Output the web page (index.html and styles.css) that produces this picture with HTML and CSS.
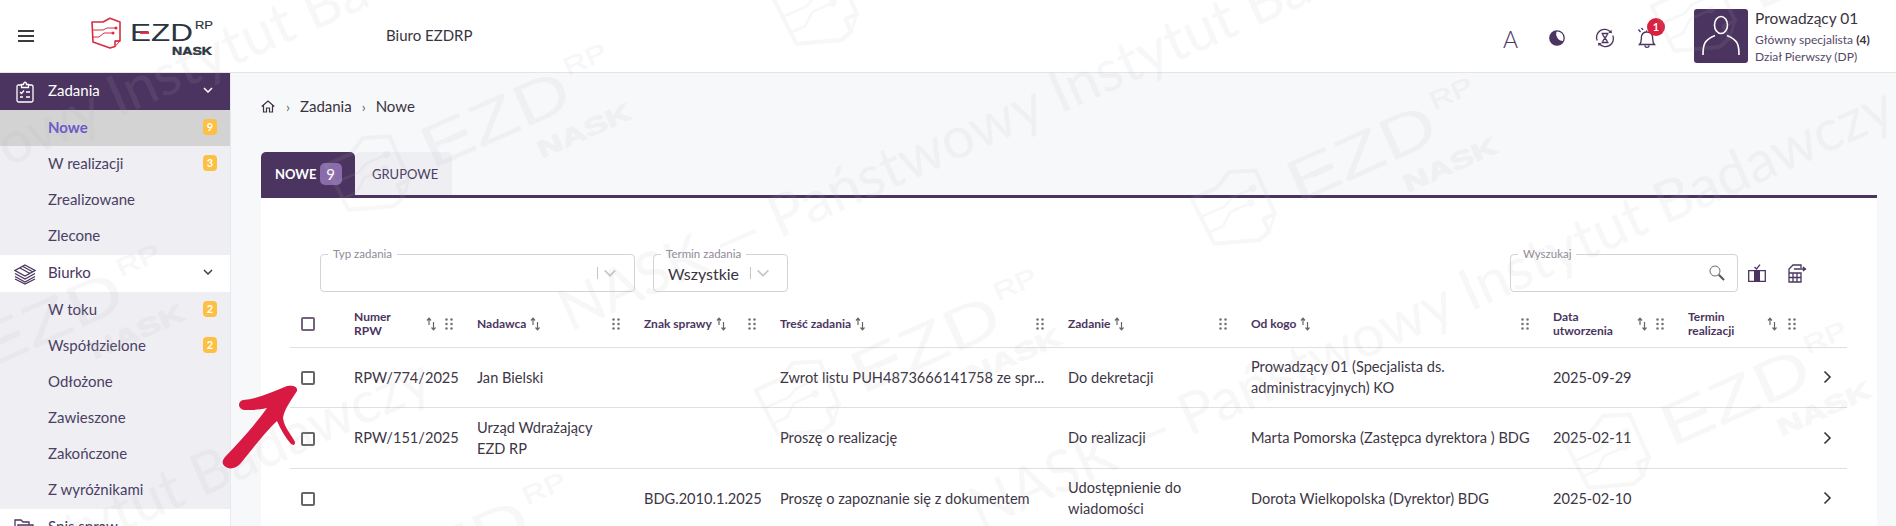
FILE: index.html
```html
<!DOCTYPE html>
<html lang="pl">
<head>
<meta charset="utf-8">
<title>EZD RP</title>
<link rel="stylesheet" href="styles.css">
</head>
<body>
<svg class="defs" width="0" height="0" aria-hidden="true">
  <defs>
    <symbol id="logo" viewBox="0 0 122 38">
      <path class="logo-line" d="M1 5H12L19 1.2 29 5V24H24V29.5L19 31 2 25Z"/>
      <path class="logo-thin" d="M24 24 29 24 24 29.5"/>
      <path class="logo-thin" d="M1 13H12L16 11H25M1.5 20H8L13 16H22"/>
      <circle class="logo-dot" cx="25" cy="11" r="1.5"/>
      <circle class="logo-dot" cx="22" cy="16" r="1.5"/>
      <text class="logo-ezd" x="39" y="24" textLength="63" lengthAdjust="spacingAndGlyphs">EZD</text>
      <rect class="logo-dash" x="49" y="14.5" width="9" height="2.4"/>
      <text class="logo-rp" x="104" y="12" textLength="18" lengthAdjust="spacingAndGlyphs">RP</text>
      <text class="logo-nask" x="81" y="38" textLength="40" lengthAdjust="spacingAndGlyphs">NASK</text>
    </symbol>
    <symbol id="sort" viewBox="0 0 10 14">
      <path d="M3 8V1.5M1 3.5 3 1.2 5 3.5M7.5 5V12.5M5.5 10.5 7.5 12.8 9.5 10.5"/>
    </symbol>
    <symbol id="grip" viewBox="0 0 8 12">
      <circle cx="1.5" cy="1.5" r="1.3"/><circle cx="6.5" cy="1.5" r="1.3"/>
      <circle cx="1.5" cy="6" r="1.3"/><circle cx="6.5" cy="6" r="1.3"/>
      <circle cx="1.5" cy="10.5" r="1.3"/><circle cx="6.5" cy="10.5" r="1.3"/>
    </symbol>
    <symbol id="chev" viewBox="0 0 10 6">
      <path d="M1 1 5 5 9 1"/>
    </symbol>
  </defs>
</svg>

<div class="app">
  <header class="topbar">
    <button class="burger" aria-label="Menu"><span></span><span></span><span></span></button>
    <svg class="logo" width="122" height="38"><use href="#logo"/></svg>
    <div class="office">Biuro EZDRP</div>
    <div class="tools">
      <span class="tool tool-a">A</span>
      <svg class="tool" width="18" height="18" viewBox="0 0 18 18"><circle class="ic-stroke" cx="9" cy="9" r="7.2"/><path class="ic-fill" d="M9 1.8A7.2 7.2 0 1 0 15.6 12 7 7 0 0 1 9 1.8Z"/></svg>
      <svg class="tool" width="20" height="20" viewBox="0 0 20 20"><path class="ic-stroke" d="M2.2 12.5A8 8 0 0 1 15.5 4M17.8 7.5A8 8 0 0 1 4.5 16"/><path class="ic-fill" d="M13.5 4.8 17 5.2 16.4 1.8ZM6.5 15.2 3 14.8 3.6 18.2Z"/><path class="ic-stroke" d="M6.5 5.5H13.5M6.5 14.5H13.5M7.5 5.5C7.5 8.5 12.5 11.5 12.5 14.5M12.5 5.5C12.5 8.5 7.5 11.5 7.5 14.5"/></svg>
      <span class="bell">
        <svg width="20" height="22" viewBox="0 0 20 22"><path class="ic-stroke" d="M2.5 17.5C5 15 4 12 4.5 9.5 5 6.5 7.5 5 10 5S15 6.500 15.500 9.500C16 12 15 15 17.500 17.500ZM8 18.500C8 21 12 21 12 18.500M9.500 5V3.500M3.500 5 1.500 2.500M6 3 4.500 .8"/></svg>
        <b class="bell-badge">1</b>
      </span>
    </div>
    <div class="user">
      <div class="avatar">
        <svg width="54" height="54" viewBox="0 0 54 54"><ellipse class="av" cx="27" cy="16" rx="6.500" ry="8.500"/><path class="av" d="M9 46C9 36 10 31 21 26.500M45 46C45 36 44 31 33 26.500"/></svg>
      </div>
      <div class="user-text">
        <div class="user-name">Prowadzący 01</div>
        <div class="user-role">Główny specjalista <b>(4)</b></div>
        <div class="user-role">Dział Pierwszy (DP)</div>
      </div>
    </div>
  </header>

  <div class="layout">
    <nav class="sidebar">
      <div class="nav-head nav-active">
        <svg class="nav-ico" width="18" height="22" viewBox="0 0 18 22"><path d="M5.500 4H2.500C1.500 4 1 4.500 1 5.500V19.500C1 20.500 1.500 21 2.500 21H15.500C16.500 21 17 20.500 17 19.500V5.500C17 4.500 16.500 4 15.500 4H12.500M5.500 3.500H7.500C7.500 .5 10.500 .5 10.500 3.500H12.500V6.500H5.500ZM4 11 5.500 12.500 8 9.500M10 11H14M4 16H7M10 16H14"/></svg>
        <span>Zadania</span>
        <svg class="nav-chev" width="10" height="6"><use href="#chev"/></svg>
      </div>
      <div class="nav-group">
        <a class="nav-item nav-current">Nowe<i class="count">9</i></a>
        <a class="nav-item">W realizacji<i class="count">3</i></a>
        <a class="nav-item">Zrealizowane</a>
        <a class="nav-item">Zlecone</a>
      </div>
      <div class="nav-head">
        <svg class="nav-ico" width="22" height="22" viewBox="0 0 22 22"><path d="M11 2 21 7.500 11 13 1 7.500ZM1 10.500 11 16 21 10.500M1 13.500 11 19 21 13.500M1 16 11 21 21 16M6 5 16 10.500M9 3.500 19 9"/></svg>
        <span>Biurko</span>
        <svg class="nav-chev" width="10" height="6"><use href="#chev"/></svg>
      </div>
      <div class="nav-group">
        <a class="nav-item">W toku<i class="count">2</i></a>
        <a class="nav-item">Współdzielone<i class="count">2</i></a>
        <a class="nav-item">Odłożone</a>
        <a class="nav-item">Zawieszone</a>
        <a class="nav-item">Zakończone</a>
        <a class="nav-item">Z wyróżnikami</a>
      </div>
      <div class="nav-head">
        <svg class="nav-ico" width="20" height="20" viewBox="0 0 20 20"><path d="M1 17V2H7L9 4H15V7M4 7H19V18H4ZM8 11H15"/></svg>
        <span>Spis spraw</span>
      </div>
    </nav>

    <main class="main">
      <div class="crumbs">
        <svg class="home" width="14" height="13" viewBox="0 0 14 13"><path d="M.7 6.500 7 1 13.300 6.500M2.500 5.500V12H5.500V8H8.500V12H11.500V5.500"/></svg>
        <span class="sep">›</span><span>Zadania</span><span class="sep">›</span><span>Nowe</span>
      </div>

      <div class="tabs">
        <div class="tab tab-on">NOWE <b class="tab-count">9</b></div>
        <div class="tab tab-off">GRUPOWE</div>
      </div>

      <section class="card">
        <div class="filters">
          <div class="field field-type">
            <label class="field-label">Typ zadania</label>
            <span class="bar"></span><svg class="sel-chev" width="14" height="8"><use href="#chev"/></svg>
          </div>
          <div class="field field-term">
            <label class="field-label">Termin zadania</label>
            <span class="field-value">Wszystkie</span>
            <span class="bar"></span><svg class="sel-chev" width="14" height="8"><use href="#chev"/></svg>
          </div>
          <div class="field field-search">
            <label class="field-label">Wyszukaj</label>
            <svg class="loupe" width="16" height="16" viewBox="0 0 16 16"><circle cx="6" cy="6" r="5"/><path class="loupe-h" d="M9.800 9.800 15 15"/></svg>
          </div>
          <svg class="act act-cols" width="18" height="18" viewBox="0 0 18 18"><path class="act-l" d="M.7 6.700H17.300V17.300H.7Z"/><path class="act-f" d="M6 6.700H12V17.300H6Z"/><path class="act-l" d="M6.500 3 8.500 5 12 .7"/></svg>
          <svg class="act act-exp" width="20" height="19" viewBox="0 0 20 19"><path class="act-l" d="M2 18V5L6 1H14V4M2 9H14V18H2ZM2 13.500H14M6 9V18M10 9V18M7 5H18M16 3 18.500 5 16 7"/></svg>
        </div>

        <table class="grid">
          <colgroup>
            <col class="c-check"><col class="c-num"><col class="c-from"><col class="c-sign"><col class="c-body"><col class="c-task"><col class="c-who"><col class="c-date"><col class="c-term"><col class="c-go">
          </colgroup>
          <thead>
            <tr>
              <th><span class="cb cb-head"></span></th>
              <th><div class="th"><span class="lbl lbl-num">Numer RPW</span><svg class="sort" width="10" height="14"><use href="#sort"/></svg><svg class="grip" width="8" height="12"><use href="#grip"/></svg></div></th>
              <th><div class="th"><span class="lbl">Nadawca</span><svg class="sort" width="10" height="14"><use href="#sort"/></svg><svg class="grip" width="8" height="12"><use href="#grip"/></svg></div></th>
              <th><div class="th"><span class="lbl">Znak sprawy</span><svg class="sort" width="10" height="14"><use href="#sort"/></svg><svg class="grip" width="8" height="12"><use href="#grip"/></svg></div></th>
              <th><div class="th"><span class="lbl">Treść zadania</span><svg class="sort" width="10" height="14"><use href="#sort"/></svg><svg class="grip" width="8" height="12"><use href="#grip"/></svg></div></th>
              <th><div class="th"><span class="lbl">Zadanie</span><svg class="sort" width="10" height="14"><use href="#sort"/></svg><svg class="grip" width="8" height="12"><use href="#grip"/></svg></div></th>
              <th><div class="th"><span class="lbl">Od kogo</span><svg class="sort" width="10" height="14"><use href="#sort"/></svg><svg class="grip" width="8" height="12"><use href="#grip"/></svg></div></th>
              <th><div class="th"><span class="lbl lbl-date">Data utworzenia</span><svg class="sort" width="10" height="14"><use href="#sort"/></svg><svg class="grip" width="8" height="12"><use href="#grip"/></svg></div></th>
              <th><div class="th"><span class="lbl lbl-term">Termin realizacji</span><svg class="sort" width="10" height="14"><use href="#sort"/></svg><svg class="grip" width="8" height="12"><use href="#grip"/></svg></div></th>
              <th></th>
            </tr>
          </thead>
          <tbody>
            <tr>
              <td><span class="cb"></span></td>
              <td>RPW/774/2025</td>
              <td>Jan Bielski</td>
              <td></td>
              <td>Zwrot listu PUH4873666141758 ze spr...</td>
              <td>Do dekretacji</td>
              <td>Prowadzący 01 (Specjalista ds. administracyjnych) KO</td>
              <td>2025-09-29</td>
              <td></td>
              <td><svg class="go" width="9" height="14" viewBox="0 0 9 14"><path d="M1.500 1.500 7 7 1.500 12.500"/></svg></td>
            </tr>
            <tr>
              <td><span class="cb"></span></td>
              <td>RPW/151/2025</td>
              <td>Urząd Wdrażający EZD RP</td>
              <td></td>
              <td>Proszę o realizację</td>
              <td>Do realizacji</td>
              <td>Marta Pomorska (Zastępca dyrektora ) BDG</td>
              <td>2025-02-11</td>
              <td></td>
              <td><svg class="go" width="9" height="14" viewBox="0 0 9 14"><path d="M1.500 1.500 7 7 1.500 12.500"/></svg></td>
            </tr>
            <tr>
              <td><span class="cb"></span></td>
              <td></td>
              <td></td>
              <td>BDG.2010.1.2025</td>
              <td>Proszę o zapoznanie się z dokumentem</td>
              <td>Udostępnienie do wiadomości</td>
              <td>Dorota Wielkopolska (Dyrektor) BDG</td>
              <td>2025-02-10</td>
              <td></td>
              <td><svg class="go" width="9" height="14" viewBox="0 0 9 14"><path d="M1.500 1.500 7 7 1.500 12.500"/></svg></td>
            </tr>
          </tbody>
        </table>
      </section>
    </main>
  </div>
</div>

<svg class="watermark" width="1896" height="526" viewBox="0 0 1896 526" aria-hidden="true">
  <text class="wm-text" transform="translate(570 332) rotate(-24)">NASK — Państwowy Instytut Badawczy</text>
  <text class="wm-text" transform="translate(980 530) rotate(-24)">NASK — Państwowy Instytut Badawczy</text>
  <text class="wm-text" transform="translate(-372 336) rotate(-24)">NASK — Państwowy Instytut Badawczy</text>
  <text class="wm-text" transform="translate(-483 802) rotate(-24)">NASK — Państwowy Instytut Badawczy</text>
  <g class="wm-logo"><use href="#logo" width="122" height="38" transform="translate(1343 170) rotate(-24) scale(2.5) translate(-61 -19)"/></g>
  <g class="wm-logo"><use href="#logo" width="122" height="38" transform="translate(477 136) rotate(-24) scale(2.5) translate(-61 -19)"/></g>
  <g class="wm-logo"><use href="#logo" width="122" height="38" transform="translate(907 361) rotate(-24) scale(2.5) translate(-61 -19)"/></g>
  <g class="wm-logo"><use href="#logo" width="122" height="38" transform="translate(1717 414) rotate(-24) scale(2.5) translate(-61 -19)"/></g>
  <g class="wm-logo"><use href="#logo" width="122" height="38" transform="translate(30 337) rotate(-24) scale(2.5) translate(-61 -19)"/></g>
  <g class="wm-logo"><use href="#logo" width="122" height="38" transform="translate(436 565) rotate(-24) scale(2.5) translate(-61 -19)"/></g>
  <g class="wm-logo"><use href="#logo" width="122" height="38" transform="translate(925 -30) rotate(-24) scale(2.5) translate(-61 -19)"/></g>
  <g class="wm-logo"><use href="#logo" width="122" height="38" transform="translate(1803 -23) rotate(-24) scale(2.5) translate(-61 -19)"/></g>
</svg>

<svg class="pointer" width="1896" height="526" viewBox="0 0 1896 526" aria-hidden="true">
  <path class="pointer-shape" d="M243 400C258 399 272 392 287 386C292 385 298 386 297 391C291 400 284 410 283 418C284 427 291 434 295 442C295 446 293 445 291 444C285 437 281 430 277 421C265 432 255 446 241 463C237 468 230 470 226 467C221 464 222 460 226 456C240 441 255 425 267 408C258 410 250 410 244 410C238 409 237 402 243 400Z"/>
</svg>
</body>
</html>
```
FILE: styles.css
```css
* { box-sizing: border-box; }
html, body { margin: 0; height: 526px; overflow: hidden; }
body {
  position: relative;
  width: 1896px;
  font-family: "Lato", "Noto Sans", sans-serif;
  font-size: 15px;
  color: #3d3645;
  background: #fff;
}
.defs { position: absolute; }

/* logo symbol */
.logo-line { fill: none; stroke: var(--logo-red, #d92b42); stroke-width: 1.6; stroke-linejoin: round; }
.logo-thin { fill: none; stroke: var(--logo-red, #d92b42); stroke-width: 1; }
.logo-dot { fill: var(--logo-red, #d92b42); }
.logo-ezd { font: 400 24px "Liberation Sans", sans-serif; fill: var(--logo-dark, #2b3540); }
.logo-dash { fill: var(--logo-red, #d92b42); }
.logo-rp { font: 400 10px "Liberation Sans", sans-serif; fill: var(--logo-dark, #2b3540); stroke: var(--logo-dark, #2b3540); stroke-width: .2; }
.logo-nask { font: 700 10px "Liberation Sans", sans-serif; fill: var(--logo-dark, #2b3540); stroke: var(--logo-dark, #2b3540); stroke-width: .4; }

/* top bar */
.topbar {
  display: flex;
  align-items: center;
  height: 73px;
  border-bottom: 1px solid #e4e4e6;
  background: #fff;
}
.burger {
  display: flex;
  flex-direction: column;
  gap: 3px;
  width: 16px;
  margin-left: 18px;
  padding: 0;
  border: 0;
  background: none;
}
.burger span { display: block; height: 2px; background: #3c3c3c; }
.logo { margin-left: 57px; }
.office { margin-left: 173px; font-size: 15px; color: #3a3340; margin-top: -2px; }
.tools { display: flex; align-items: center; margin-left: auto; gap: 29px; margin-top: 3px; }
.tool { display: block; color: #4b3560; }
.tool-a { font-size: 23px; font-weight: 300; width: 17px; text-align: center; margin-top: 2px; }
.ic-stroke { fill: none; stroke: #4b3560; stroke-width: 1.3; }
.ic-fill { fill: #4b3560; }
.bell { position: relative; display: block; height: 22px; margin-left: -7px; }
.bell-badge {
  position: absolute;
  left: 10px;
  top: -9px;
  width: 18px;
  height: 18px;
  border-radius: 50%;
  background: #d9203f;
  color: #fff;
  font-size: 11px;
  line-height: 18px;
  text-align: center;
}
.user { display: flex; align-items: center; margin-left: 37px; margin-right: 30px; width: 172px; }
.avatar { width: 54px; height: 54px; background: #4b3560; border-radius: 3px; flex: none; }
.avatar svg { display: block; }
.av { fill: none; stroke: #fff; stroke-width: 1.6; }
.user-text { margin-left: 7px; }
.user-name { font-size: 15.500px; line-height: 21px; color: #3a3340; margin-bottom: 2px; }
.user-role { font-size: 12px; line-height: 17px; color: #55486a; white-space: nowrap; }
.user-role b { font-weight: 700; color: #3a3340; }

/* layout */
.layout { display: flex; height: 453px; }
.sidebar { flex: 0 0 231px; border-right: 1px solid #e9e9ed; background: #fff; overflow: hidden; }
.nav-head {
  display: flex;
  align-items: center;
  height: 37px;
  padding: 0 17px 3px 48px;
  position: relative;
  background: #fff;
  color: #4b3560;
  font-size: 15px;
}
.nav-active { background: #4b3560; color: #fff; }
.nav-ico {
  position: absolute;
  left: 14px;
  top: 50%;
  transform: translateY(-50%);
  fill: none;
  stroke: currentColor;
  stroke-width: 1.300;
}
.nav-active .nav-ico { left: 16px; }
.nav-chev { margin-left: auto; fill: none; stroke: currentColor; stroke-width: 1.500; overflow: visible; }
.nav-group { background: #eeeef3; padding-bottom: 1px; }
.nav-item {
  display: flex;
  align-items: center;
  height: 36px;
  padding: 0 13px 3px 48px;
  color: #4b3f63;
  font-size: 15px;
}
.nav-current { background: #d3d3d3; color: #6a57c9; font-weight: 700; }
.count {
  margin-left: auto;
  width: 14px;
  height: 16px;
  border-radius: 4px;
  background: #fdc040;
  color: #fff;
  font-size: 11px;
  font-style: normal;
  font-weight: 700;
  line-height: 16px;
  text-align: center;
}

/* main */
.main { flex: 1; min-width: 0; padding: 23px 19px 0 30px; background: #f7f8fa; }
.crumbs { display: flex; align-items: center; gap: 10px; height: 20px; color: #3a3340; font-size: 15px; }
.home { fill: none; stroke: #3a3340; stroke-width: 1.200; margin-right: 1px; }
.sep { color: #666; font-size: 14px; }

.tabs { display: flex; margin-top: 36px; height: 43px; }
.tab {
  display: flex;
  align-items: center;
  background: #eeeef3;
  border-radius: 5px 5px 0 0;
  color: #4b3f63;
  font-size: 13px;
}
.tab-on { width: 94px; padding-left: 14px; background: #4b3560; color: #fff; font-weight: 700; white-space: pre; }
.tab-off { width: 97px; padding-left: 17px; }
.tab-count {
  flex: none;
  width: 22px;
  height: 22px;
  margin-left: 0;
  border-radius: 5px;
  background: #8a6cab;
  font-size: 15px;
  font-weight: 400;
  line-height: 22px;
  text-align: center;
}

.card {
  border-top: 3px solid #4b3560;
  background: #fff;
  padding: 56px 30px 0 29px;
  height: 400px;
}

/* filters */
.filters { display: flex; align-items: center; margin-left: 30px; height: 38px; margin-right: 40px; }
.field {
  position: relative;
  display: flex;
  align-items: center;
  height: 38px;
  border: 1px solid #d3d3d6;
  border-radius: 4px;
  background: #fff;
}
.field-type { width: 315px; justify-content: flex-end; padding-right: 17px; }
.field-term { width: 135px; margin-left: 18px; padding: 0 17px 0 14px; }
.field-search { width: 228px; margin-left: auto; justify-content: flex-end; padding-right: 12px; }
.field-label {
  position: absolute;
  left: 7px;
  top: -8px;
  padding: 0 5px;
  background: #fff;
  color: #918a98;
  font-size: 11.500px;
  line-height: 14px;
}
.field-value { font-size: 16px; color: #3a3340; }
.bar { width: 1px; height: 12px; background: #c6c6c6; margin-right: 5px; }
.field-term .bar { margin-left: auto; }
.sel-chev { fill: none; stroke: #c8c8c8; stroke-width: 1.300; }
.loupe { fill: none; stroke: #6a6a72; stroke-width: 1; }
.loupe-h { stroke-width: 2; stroke: #555; }
.act { display: block; }
.act-cols { margin-left: 10px; }
.act-exp { margin-left: 21px; }
.act-l { fill: none; stroke: #4b3560; stroke-width: 1.300; }
.act-f { fill: #4b3560; }

/* table */
.grid { width: 1557px; margin-top: 10px; border-collapse: collapse; table-layout: fixed; }
.c-check { width: 64px; }
.c-num { width: 123px; }
.c-from { width: 167px; }
.c-sign { width: 136px; }
.c-body { width: 288px; }
.c-task { width: 183px; }
.c-who { width: 302px; }
.c-date { width: 135px; }
.c-term { width: 132px; }
.c-go { width: 27px; }
.grid th, .grid td { padding: 0; text-align: left; font-weight: 400; border-bottom: 1px solid #dfdfe2; }
.grid thead tr { height: 45px; }
.grid tbody tr { height: 60.500px; }
.grid td { font-size: 14.600px; line-height: 21px; color: #3d3645; padding-right: 12px; }
.grid td:nth-child(3) { padding-right: 40px; }
.grid td:first-child, .grid th:first-child { padding-left: 11px; }
.grid td:last-child { padding-right: 0; }
.th { display: flex; align-items: center; gap: 4px; padding-right: 24px; }
.lbl { font-size: 12px; line-height: 14px; font-weight: 700; color: #4b3560; }
.lbl-num { width: 68px; padding-right: 28px; }
.lbl-date { width: 80px; }
.lbl-term { width: 75px; }
.sort { flex: none; fill: none; stroke: #666; stroke-width: 1.200; }
.grip { flex: none; margin-left: auto; fill: #777; }
.cb { display: block; width: 14px; height: 14px; border: 2px solid #666; border-radius: 2px; }
.cb-head { border-color: #75607f; }
.grid td .cb { margin-top: 2px; }
.go { display: block; fill: none; stroke: #333; stroke-width: 1.600; margin-left: 3px; }

/* overlays */
.watermark, .pointer { position: absolute; left: 0; top: 0; pointer-events: none; }
.wm-text { font: 400 58px "Lato", sans-serif; fill: #b4b4b4; opacity: .1; }
.wm-logo { --logo-red: #b4b4b4; --logo-dark: #b4b4b4; opacity: .1; }
.pointer-shape { fill: #d81a42; }
```
